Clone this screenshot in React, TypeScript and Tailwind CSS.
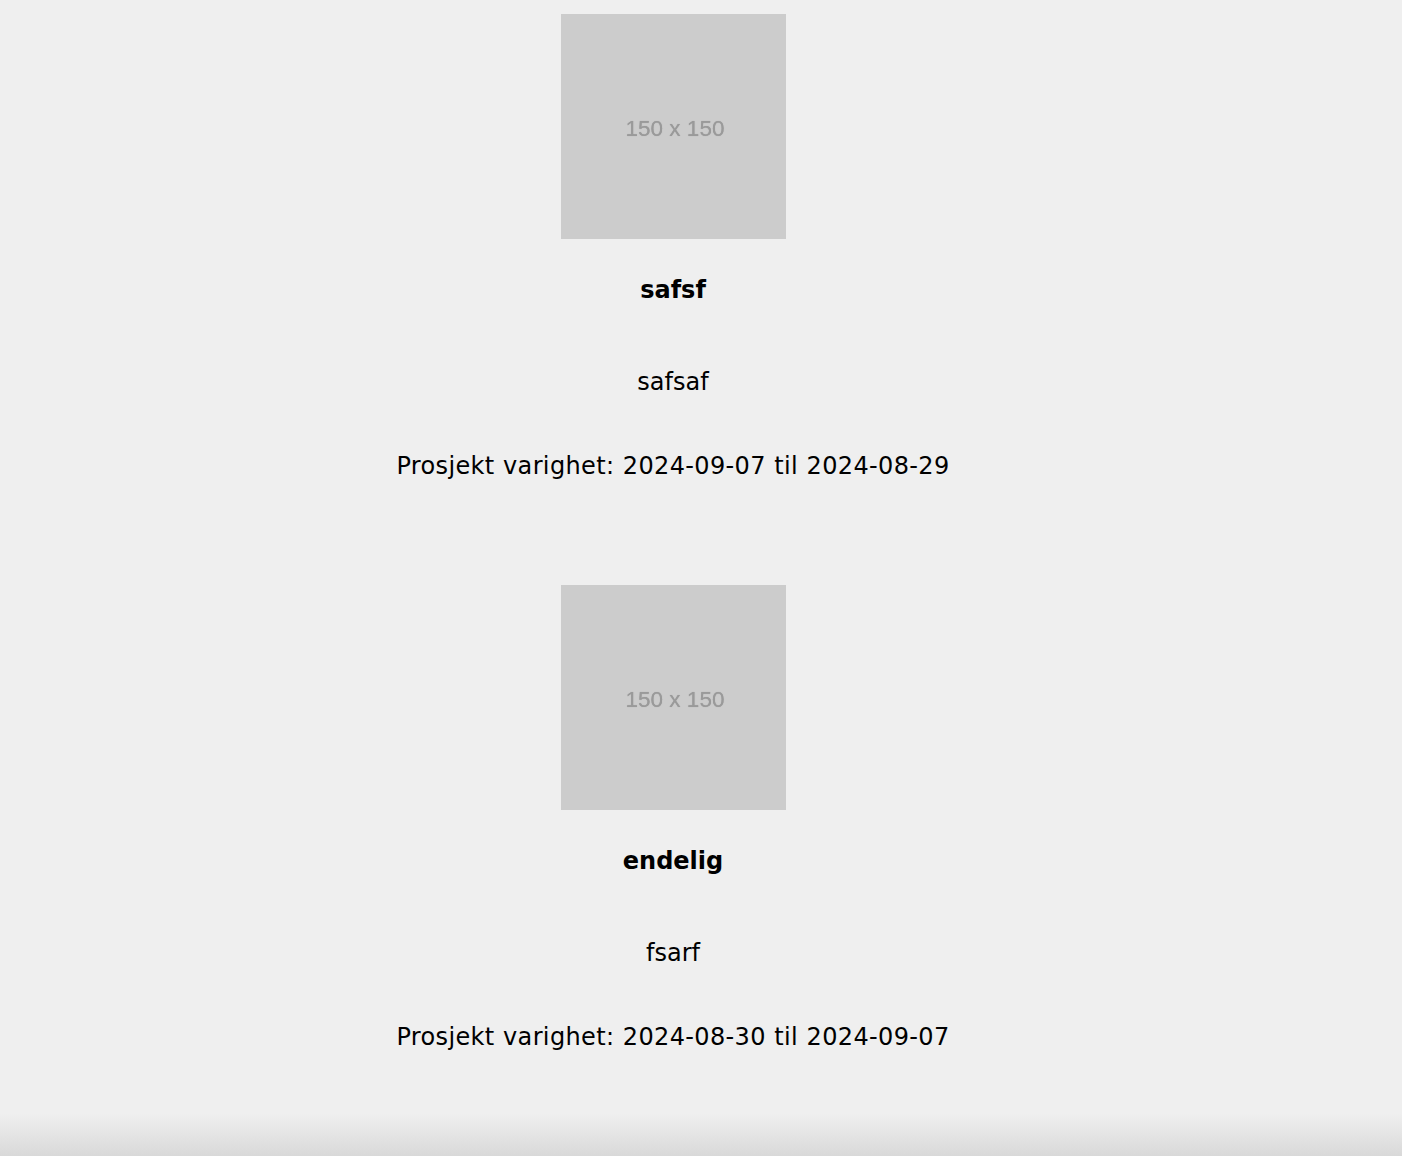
import React from "react";

type Project = { title: string; desc: string; from: string; to: string };

const projects: Project[] = [
  { title: "safsf", desc: "safsaf", from: "2024-09-07", to: "2024-08-29" },
  { title: "endelig", desc: "fsarf", from: "2024-08-30", to: "2024-09-07" },
];

function Card({ p }: { p: Project }) {
  return (
    <div className="flex flex-col items-center">
      <div className="w-[225px] h-[225px] bg-[#cccccc] flex items-center justify-center pt-[5px] pl-[4px]">
        <span className="text-[22.5px] text-[#9a9a9a] font-['Liberation_Sans',Arial,sans-serif] blur-[0.3px] [text-shadow:0_0_0.8px_#9a9a9a]">
          150 x 150
        </span>
      </div>
      <div className="mt-[37px] text-[24px] leading-[28px] font-bold">{p.title}</div>
      <div className="mt-[64px] text-[24px] leading-[28px]">{p.desc}</div>
      <div className="mt-[56px] text-[24px] leading-[28px] tracking-[0.35px] [word-spacing:0.5px]">
        Prosjekt varighet: {p.from} til {p.to}
      </div>
    </div>
  );
}

export default function App() {
  return (
    <div className="relative w-full h-[1156px] bg-[#efefef] text-black font-['DejaVu_Sans',Verdana,sans-serif] overflow-hidden">
      <div className="pr-[56px] pt-[14px] flex flex-col gap-[105px]">
        {projects.map((p) => (
          <Card key={p.title} p={p} />
        ))}
      </div>
      <div className="absolute left-0 right-0 bottom-0 h-[42px] bg-gradient-to-b from-[#efefef] to-[#d9d9d9]" />
    </div>
  );
}
